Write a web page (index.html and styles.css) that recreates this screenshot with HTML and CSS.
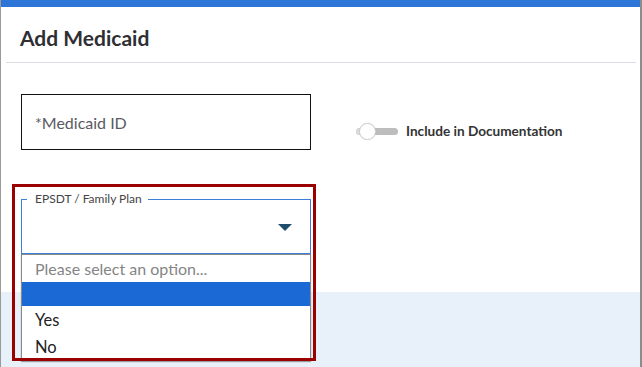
FILE: index.html
```html
<!DOCTYPE html>
<html lang="en">
<head>
    <meta charset="UTF-8">
    <meta name="viewport" content="width=device-width, initial-scale=1.0">
    <title>Add Medicaid</title>
    <link rel="stylesheet" href="styles.css">
</head>
<body>
    <div class="modal">
        <div class="topbar"></div>
        <div class="modal-header">
            <h2 class="modal-title">Add Medicaid</h2>
        </div>

        <div class="modal-body">
            <div class="row">
                <div class="text-field">*Medicaid ID</div>
                <label class="toggle">
                    <span class="track"><span class="knob"></span></span>
                    <span class="toggle-label">Include in Documentation</span>
                </label>
            </div>

            <div class="select-field">
                <div class="select-box">
                    <span class="floating-label">EPSDT / Family Plan</span>
                    <span class="arrow"></span>
                </div>
                <ul class="menu">
                    <li class="placeholder">Please select an option...</li>
                    <li class="selected"></li>
                    <li>Yes</li>
                    <li>No</li>
                </ul>
                <div class="highlight"></div>
            </div>
        </div>

        <div class="modal-footer"></div>
    </div>
</body>
</html>
```

FILE: styles.css
```css
* { box-sizing: border-box; }
html, body { margin: 0; padding: 0; background: #fff; }
body { font-family: Lato, "Open Sans", Arial, sans-serif; color: #333; overflow: hidden; }

.modal { width: 642px; height: 367px; border-left: 1px solid #9a9a9a; border-right: 2px solid #8c8c8c; background: #fff; display: flex; flex-direction: column; }
.topbar { height: 7px; background: #2d76d8; flex: none; }

.modal-header { height: 56px; margin: 0 4px 0 5px; padding: 18px 0 0 14px; border-bottom: 1px solid #dcdce4; flex: none; }
.modal-title { margin: 0; font-size: 21px; line-height: 26px; font-weight: 700; color: #2f2f33; }

.modal-body { padding: 31px 0 38px 20px; flex: none; }
.row { display: flex; align-items: flex-start; gap: 45px; }

.text-field { width: 290px; height: 56px; border: 1px solid #111; display: flex; align-items: center; padding: 0 0 0 13px; font-size: 16px; color: #5a5a62; }

.toggle { display: flex; align-items: center; gap: 8px; margin-top: 29px; }
.track { position: relative; width: 42px; height: 7px; border-radius: 4px; background: #bdbdbd; }
.track::before { content: ""; position: absolute; left: 0; top: 0; width: 10px; height: 7px; border-radius: 4px 0 0 4px; background: #dcdcdc; }
.knob { position: absolute; left: 3px; top: -5px; width: 17px; height: 17px; border-radius: 50%; background: #fff; border: 1px solid #cfcfcf; box-shadow: 0 0 1px rgba(0,0,0,0.15); }
.toggle-label { font-size: 13.6px; font-weight: 700; color: #333; }

.select-field { position: relative; width: 290px; margin-top: 49px; }
.select-box { position: relative; height: 55px; border: 1px solid #3b7fd8; display: flex; align-items: center; justify-content: flex-end; padding: 2px 18px 0 0; }
.floating-label { position: absolute; left: 5px; top: -8px; padding: 0 6px 0 8px; background: #fff; font-size: 12px; line-height: 14px; color: #444; }
.arrow { width: 0; height: 0; border-left: 7px solid transparent; border-right: 7px solid transparent; border-top: 7px solid #1f4d6b; }

.menu { position: absolute; left: 0; top: 55px; width: 290px; height: 107px; margin: 0; padding: 0; list-style: none; background: #fff; border: 1px solid #8a8a8a; box-shadow: 0 1px 1px rgba(0,0,0,0.35); z-index: 2; }
.menu li { height: 27px; line-height: 28px; padding-left: 13px; font-size: 16.5px; color: #222; }
.menu .placeholder { height: 27px; line-height: 27px; font-size: 16px; color: #858585; }
.menu .selected { height: 24px; background: #1b69d5; }

.highlight { position: absolute; left: -9px; top: -15px; width: 304px; height: 177px; border: 3px solid #9a0000; z-index: 3; pointer-events: none; }

.modal-footer { flex: 1; background: #e8f0fa; }
```
